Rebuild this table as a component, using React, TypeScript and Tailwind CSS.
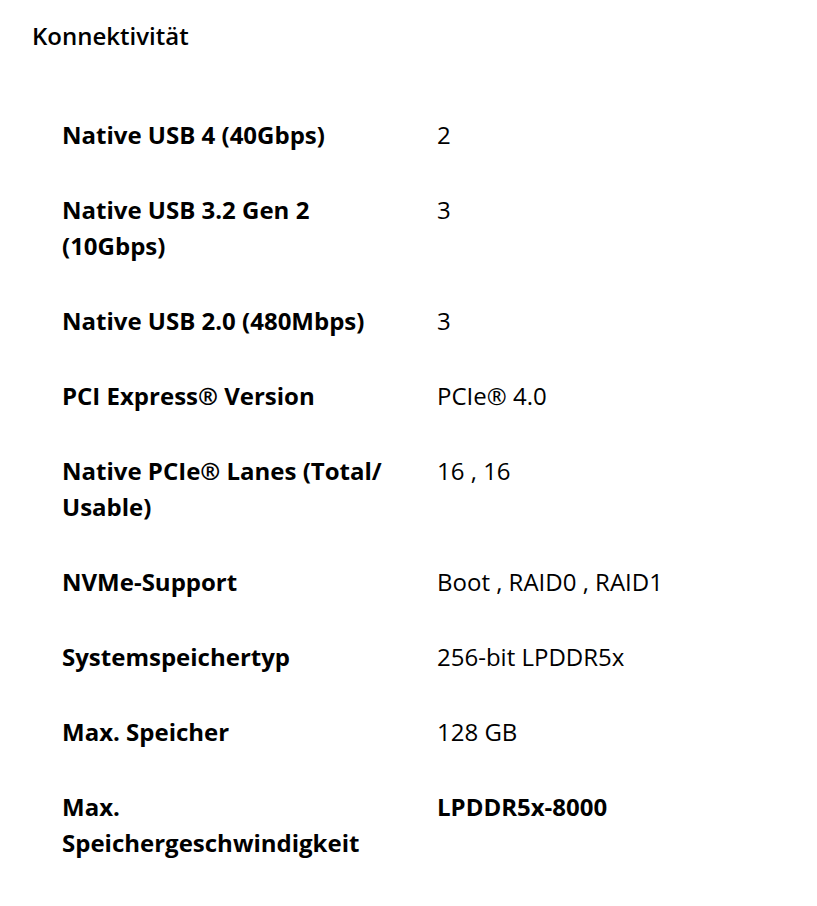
import React from 'react';

const specs: { label: string; value: string; strong?: boolean }[] = [
  { label: 'Native USB 4 (40Gbps)', value: '2' },
  { label: 'Native USB 3.2 Gen 2 (10Gbps)', value: '3' },
  { label: 'Native USB 2.0 (480Mbps)', value: '3' },
  { label: 'PCI Express® Version', value: 'PCIe® 4.0' },
  { label: 'Native PCIe® Lanes (Total/\u200BUsable)', value: '16 , 16' },
  { label: 'NVMe-Support', value: 'Boot , RAID0 , RAID1' },
  { label: 'Systemspeichertyp', value: '256-bit LPDDR5x' },
  { label: 'Max. Speicher', value: '128 GB' },
  { label: 'Max. Speichergeschwindigkeit', value: 'LPDDR5x-8000', strong: true },
];

const App: React.FC = () => {
  return (
    <div className="min-h-screen bg-white text-black pl-[33px] pr-[33px] pt-[18px] pb-[20px] font-['Open_Sans',sans-serif]">
      <h2 className="text-[24px] leading-[36px] font-semibold -ml-[1px]">Konnektivität</h2>
      <div className="mt-[43px] ml-[29px]">
        {specs.map(item => (
          <div key={item.label} className="grid grid-cols-[375px_1fr] pt-[20px] pb-[19px] text-[24px] leading-[36px]">
            <div className="font-bold pr-[40px]">{item.label}</div>
            <div className={item.strong ? 'font-bold' : 'font-normal'}>{item.value}</div>
          </div>
        ))}
      </div>
    </div>
  );
};

export default App;
